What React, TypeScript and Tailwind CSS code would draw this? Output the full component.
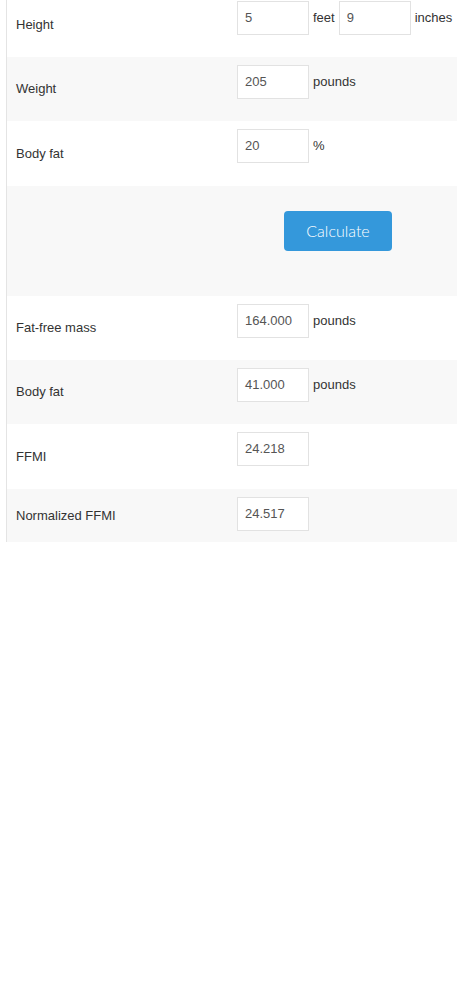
const rows = [
    { label: "Weight", value: "205", unit: "pounds", pb: "pb-[22px]" },
    { label: "Body fat", value: "20", unit: "%", pb: "pb-[23px]" },
];

const results = [
    { label: "Fat-free mass", value: "164.000", unit: "pounds", pb: "pb-[22px]" },
    { label: "Body fat", value: "41.000", unit: "pounds", pb: "pb-[22px]" },
    { label: "FFMI", value: "24.218", unit: "", pb: "pb-[23px]" },
    { label: "Normalized FFMI", value: "24.517", unit: "", pb: "pb-[11px]" },
];

function Field({ value }: { value: string }) {
    return (
        <div className="w-[72px] h-[34px] border border-[#e2e2e2] bg-white pl-[7px] flex items-center text-[13px] text-[#555]">
            {value}
        </div>
    );
}

function Row({ label, value, unit, gray, pb }: { label: string; value: string; unit: string; gray: boolean; pb: string }) {
    return (
        <div className={`grid grid-cols-[222px_1fr] ${gray ? "bg-[#f8f8f8]" : "bg-white"}`}>
            <div className="flex items-center pl-[9px] text-[13px] text-[#333]">{label}</div>
            <div className={`flex items-center gap-[4px] pl-2 pt-2 ${pb} text-[13px] text-[#333]`}>
                <Field value={value} />
                {unit && <span>{unit}</span>}
            </div>
        </div>
    );
}

export default function App() {
    return (
        <div className="min-h-[1000px] bg-white font-['Liberation_Sans',Arial,sans-serif] overflow-hidden">
            <div className="ml-[6px] border-l border-[#e4e4e4] -mt-[7px]">
                {/* Height row has two fields */}
                <div className="grid grid-cols-[222px_1fr] bg-white">
                    <div className="flex items-center pl-[9px] text-[13px] text-[#333]">Height</div>
                    <div className="flex items-center gap-[4px] pl-2 pt-2 pb-[22px] text-[13px] text-[#333]">
                        <Field value="5" />
                        <span>feet</span>
                        <Field value="9" />
                        <span>inches</span>
                    </div>
                </div>

                {rows.map((r, i) => (
                    <Row key={r.label} {...r} gray={i % 2 === 0} />
                ))}

                <div className="bg-[#f8f8f8] pt-[25px] pb-[45px] pl-[277px]">
                    <button className="w-[108px] h-[40px] rounded-[4px] bg-[#3498db] text-white text-[16px] font-light font-['Lato','Open_Sans',sans-serif]">
                        Calculate
                    </button>
                </div>

                {results.map((r, i) => (
                    <Row key={r.label + i} {...r} gray={i % 2 === 1} />
                ))}
            </div>
        </div>
    );
}
